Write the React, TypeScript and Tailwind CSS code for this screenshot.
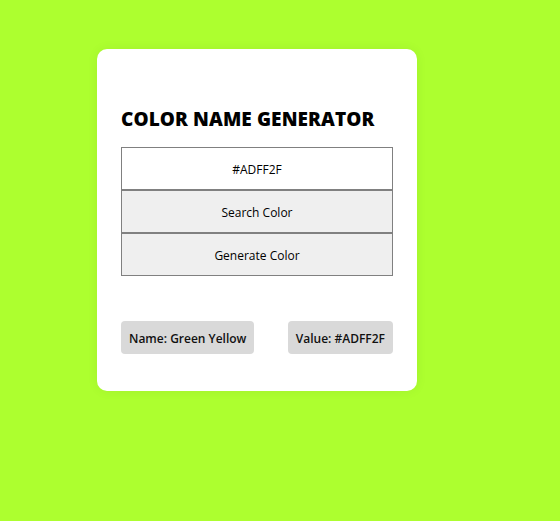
import React, { useState } from 'react';

export default function App() {
    const [hex, setHex] = useState('#ADFF2F');
    return (
        <div className="min-h-[521px] w-full bg-[#adff2f] pt-[49px] pl-[97px]" style={{ fontFamily: '"Open Sans", "Noto Sans", sans-serif' }}>
            <div className="w-[320px] h-[342px] bg-white rounded-[10px] shadow-[0_0_12px_rgba(0,0,0,0.06)] px-6 pt-[57px] flex flex-col">
                <h1 className="text-[19px] leading-[27px] font-extrabold text-black tracking-[0.1px]">COLOR NAME GENERATOR</h1>
                <div className="mt-[14px] flex flex-col">
                    <input
                        value={hex}
                        onChange={(e) => setHex(e.target.value)}
                        className="h-[43px] w-full border border-[#808080] bg-white pt-[2px] text-center text-[12px] text-black outline-none"
                    />
                    <button className="h-[43px] w-full border border-[#808080] bg-[#efefef] pt-[2px] text-[12px] text-black">
                        Search Color
                    </button>
                    <button className="h-[43px] w-full border border-[#808080] bg-[#efefef] pt-[2px] text-[12px] text-black">
                        Generate Color
                    </button>
                </div>
                <div className="mt-[45px] flex justify-between">
                    <span className="h-[33px] px-2 pt-[2px] flex items-center rounded-[4px] bg-[#d9d9d9] text-[12px] font-semibold text-[#111]">
                        Name: Green Yellow
                    </span>
                    <span className="h-[33px] px-2 pt-[2px] flex items-center rounded-[4px] bg-[#d9d9d9] text-[12px] font-semibold text-[#111]">
                        Value: {hex}
                    </span>
                </div>
            </div>
        </div>
    );
}
